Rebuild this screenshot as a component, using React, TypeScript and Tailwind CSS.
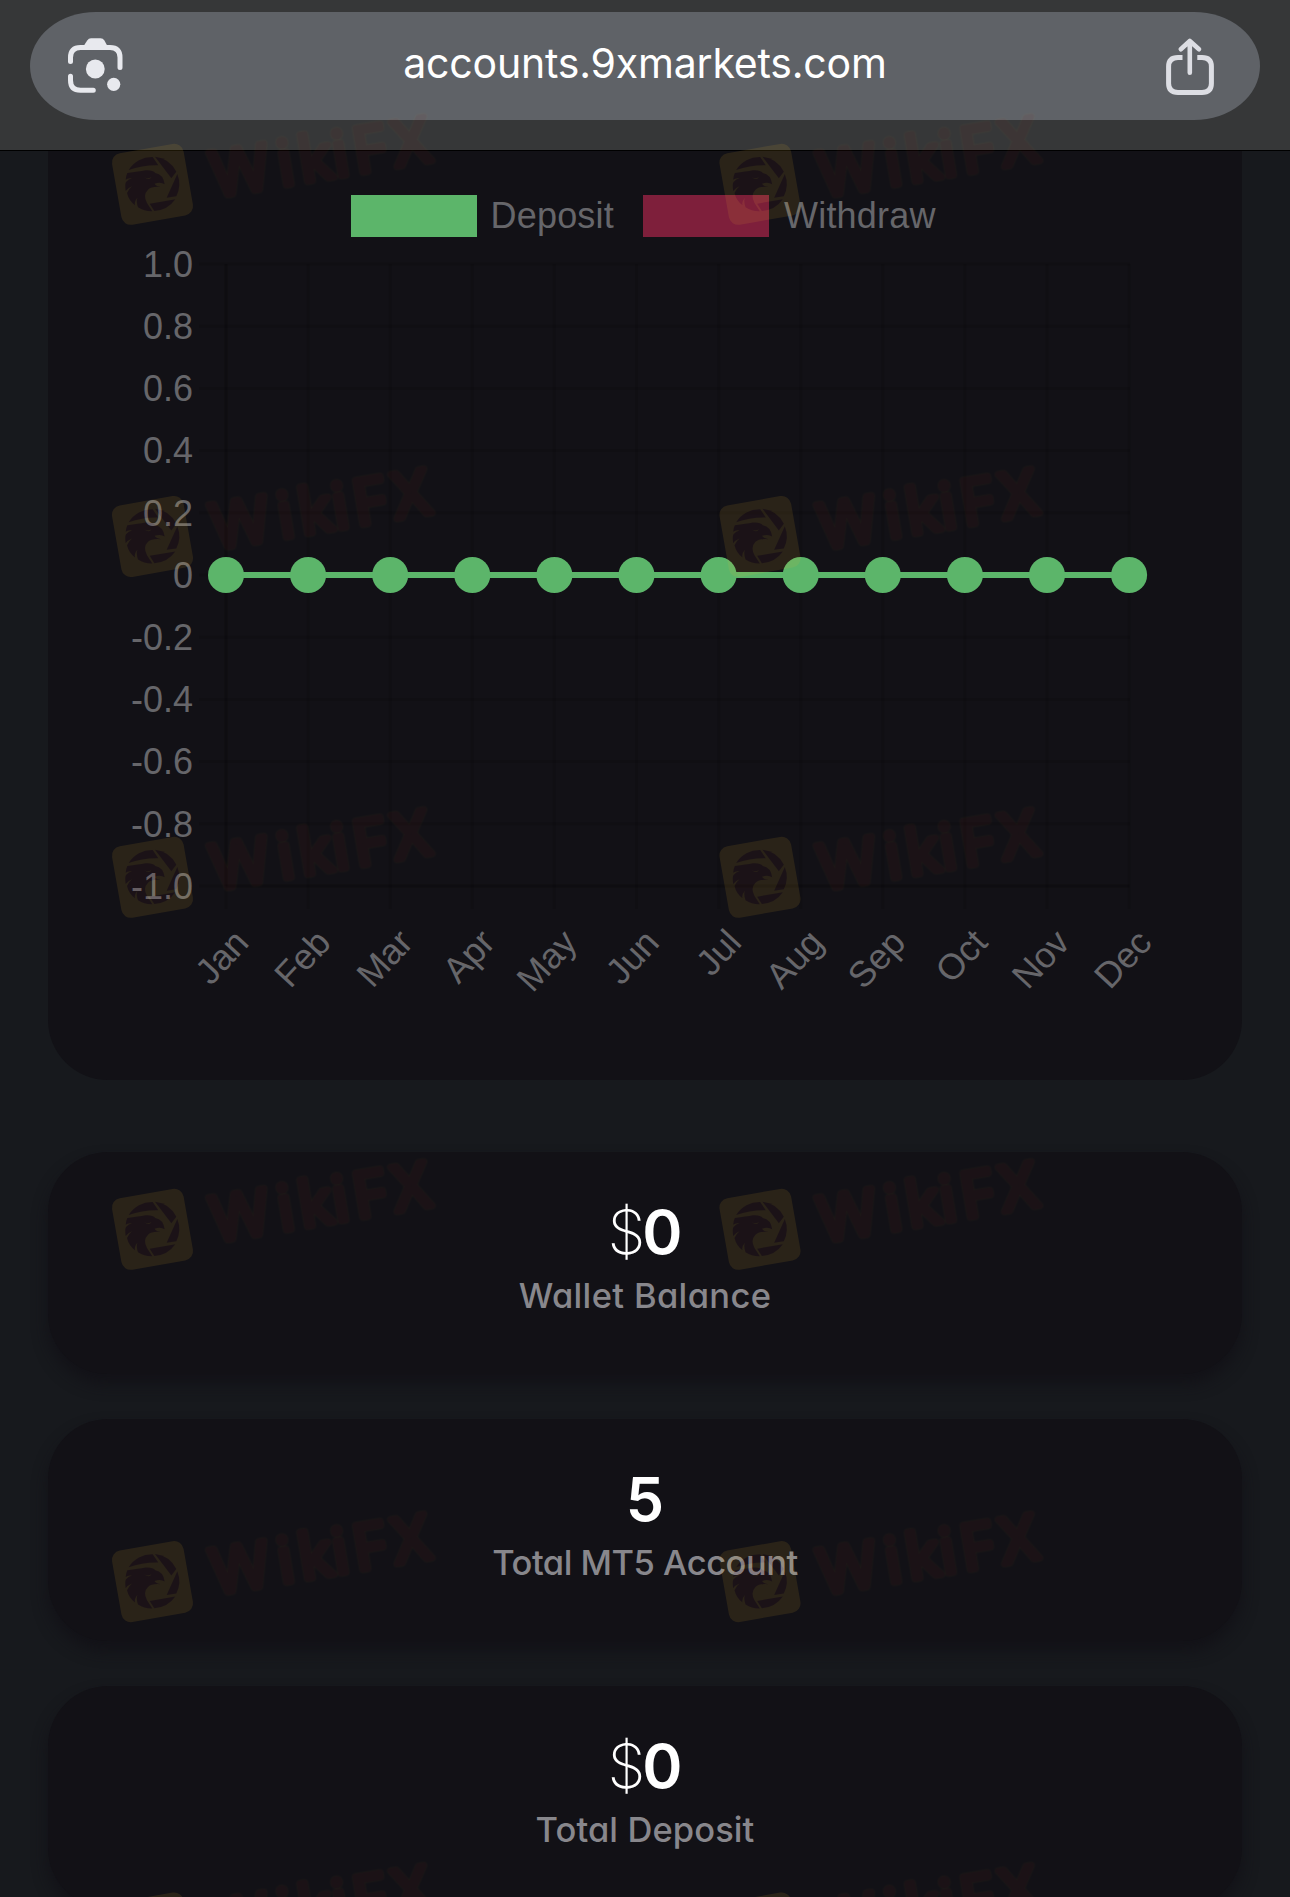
import React from 'react';

interface Stat {
  value: string;
  currency?: boolean;
  label: string;
  labelClass: string;
}

const months = ['Jan', 'Feb', 'Mar', 'Apr', 'May', 'Jun', 'Jul', 'Aug', 'Sep', 'Oct', 'Nov', 'Dec'];
const ticks = ['1.0', '0.8', '0.6', '0.4', '0.2', '0', '-0.2', '-0.4', '-0.6', '-0.8', '-1.0'];

const stats: Stat[] = [
  { value: '0', currency: true, label: 'Wallet Balance', labelClass: 'tracking-[0.35px]' },
  { value: '5', label: 'Total MT5 Account', labelClass: 'tracking-[-0.5px]' },
  { value: '0', currency: true, label: 'Total Deposit', labelClass: 'tracking-[0.1px]' },
];

const CameraIcon: React.FC = () => (
  <svg className="h-[60px] w-[60px]" viewBox="66 36 60 60" fill="none" stroke="#e8e9ee" strokeWidth="5" strokeLinecap="round">
    <path d="M70.5 61.5V57.5Q70.5 47.5 80.5 47.5H110Q120 47.5 120 57.5V67.5" />
    <path d="M70.5 76.3V80.3Q70.5 90.3 80.5 90.3H93.3" />
    <path d="M83 47L87.2 40.4Q88.6 38.2 91 38.2H100.5Q103 38.2 104.4 40.4L108 47Z" fill="#e8e9ee" stroke="none" />
    <circle cx="95.3" cy="69" r="9.4" fill="#e8e9ee" stroke="none" />
    <circle cx="113.7" cy="84.3" r="6.6" fill="#e8e9ee" stroke="none" />
  </svg>
);

const ShareIcon: React.FC = () => (
  <svg className="h-[60px] w-[52px]" viewBox="1164 36 52 60" fill="none" stroke="#dddee4" strokeWidth="5">
    <path d="M1182.5 57.5H1178Q1168.6 57.5 1168.6 66.5V83.5Q1168.6 92.4 1178 92.4H1202Q1211.4 92.4 1211.4 83.5V66.5Q1211.4 57.5 1202 57.5H1197.3" />
    <path d="M1189.8 41.5V72.8M1180.8 49.3L1189.8 41L1199 49.3" strokeWidth="4.6" strokeLinecap="round" strokeLinejoin="round" />
  </svg>
);

const Chart: React.FC = () => {
  const x = (i: number) => 226 + i * 82.1;
  const y = (i: number) => 264 + i * 62.2;

  return (
    <svg className="block h-[842px] w-[1194px]" viewBox="48 237 1194 842">
      <g stroke="#000000" strokeOpacity="0.1" strokeWidth="3">
        {ticks.map((t, i) => (
          <line key={t} x1="199" x2="1130" y1={y(i)} y2={y(i)} />
        ))}
        {months.map((m, i) => (
          <line key={m} x1={x(i)} x2={x(i)} y1="264" y2="909" />
        ))}
        {/* axis borders */}
        <line x1="226" x2="226" y1="264" y2="886" />
        <line x1="226" x2="1129" y1="886" y2="886" />
      </g>
      <g fill="#66666a" fontSize="36" fontFamily='"Liberation Sans", Arial, sans-serif'>
        {ticks.map((t, i) => (
          <text key={t} x="193" y={y(i) + 12.8} textAnchor="end">{t}</text>
        ))}
        {months.map((m, i) => (
          <text key={m} transform={`translate(${x(i) + 24.5} 944) rotate(-47)`} textAnchor="end">{m}</text>
        ))}
      </g>
      <line x1={x(0)} x2={x(11)} y1="575" y2="575" stroke="#5cb56a" strokeWidth="6" />
      {months.map((m, i) => (
        <circle key={m} cx={x(i)} cy="575" r="18" fill="#5cb56a" />
      ))}
    </svg>
  );
};

const StatCard: React.FC<{ stat: Stat }> = ({ stat }) => (
  <div className="flex h-[222px] flex-col items-center rounded-[60px] bg-[#121116] pt-[50px] shadow-[0_10px_15px_rgba(18,17,22,0.85)]">
    <div className="flex h-[60px] items-center text-[61px] leading-[60px] font-semibold text-white">
      {stat.currency && <span className="font-extralight tracking-[-3px]">$</span>}
      <span>{stat.value}</span>
    </div>
    <div className={`mt-[13px] text-[34.5px] leading-[42px] font-medium text-[#88878c] [font-feature-settings:'cv11'] ${stat.labelClass}`}>
      {stat.label}
    </div>
  </div>
);

const markRows = [184.3, 536.5, 877.3, 1229.3, 1581.6, 1933];
const markCols = [152.5, 760];

// Tiled brand mark laid over the whole page
const Watermark: React.FC = () => (
  <svg className="pointer-events-none absolute inset-0 h-[1897px] w-[1290px]" viewBox="0 0 1290 1897">
    {markRows.map((cy) =>
      markCols.map((cx) => (
        <g key={`${cx}-${cy}`} transform={`translate(${cx} ${cy})`}>
          <g opacity="0.105">
            <rect x="-36.3" y="-36.3" width="72.6" height="72.6" rx="9.5" fill="#f0b82d" transform="rotate(-10)" />
            <g transform="scale(0.3333) translate(-141.5 -238)" fill="#6c2222">
              <path d="M70 195A82 82 0 0 1 142 156L159 181Q112 180 70 195Z" />
              <path d="M149 155A82 82 0 0 1 213 200L198 220Z" />
              <path d="M216 207A82 82 0 0 1 213 274L184 278Z" />
              <path d="M133 296L210 283A82 82 0 0 1 147 318Z" />
              <path
                fillRule="evenodd"
                d="M66 204Q100 200 120 196Q142 194 150 204Q174 208 178 238Q166 230 148 236Q150 243 168 246Q140 243 128 254Q112 270 125 294L141 319Q118 320 98 307Q92 290 96 278Q86 290 89 301Q70 286 65 264Q72 250 80 244Q66 250 61 258Q58 236 62 231Q70 222 80 220Q68 218 61 224Q62 212 66 204ZM116 216Q128 224 138 216Q132 228 116 216Z"
              />
            </g>
          </g>
          <text
            className="drop-shadow-[0_0_1px_#f0b82d]"
            transform="rotate(-9.5)"
            x="88.5 134.5 164.5 190 219.5 262"
            y="23"
            textAnchor="middle"
            opacity="0.07"
            fontSize="63"
            fontWeight="500"
            fontFamily='"Open Sans", sans-serif'
            fill="#8c2418"
            stroke="#8c2418"
            strokeWidth="5.5"
            strokeLinejoin="round"
          >
            WikiFX
          </text>
        </g>
      ))
    )}
  </svg>
);

const App: React.FC = () => {
  return (
    <div className="relative h-[1897px] w-[1290px] overflow-hidden bg-[#17191d] font-['Inter',sans-serif]">
      <header className="h-[151px] border-b border-black bg-[#363738] px-[30px] pt-3">
        <div className="flex h-[108px] items-center justify-between rounded-[66px/54px] bg-[#5f6267] pr-[44px] pl-[36px]">
          <CameraIcon />
          <div className="mt-[-5px] text-[41px] tracking-[-0.2px] text-white">accounts.9xmarkets.com</div>
          <ShareIcon />
        </div>
      </header>

      <main className="px-12">
        <section className="h-[929px] rounded-b-[60px] bg-[#121116] pt-[44px]">
          <div className="flex h-[42px] items-center pl-[302.5px] font-['Liberation_Sans',Arial,sans-serif] text-[36px] leading-[42px] tracking-[0.2px] text-[#66666a]">
            <span className="mr-[14px] h-[42px] w-[126px] bg-[#5cb56a]" />
            <span className="w-[152.5px]">Deposit</span>
            <span className="mr-[15px] h-[42px] w-[126px] bg-[#7e1f3b]" />
            <span>Withdraw</span>
          </div>
          <Chart />
        </section>

        <div className="mt-[72px] flex flex-col gap-[45px]">
          {stats.map((stat) => (
            <StatCard key={stat.label} stat={stat} />
          ))}
        </div>
      </main>

      <Watermark />
    </div>
  );
};

export default App;
